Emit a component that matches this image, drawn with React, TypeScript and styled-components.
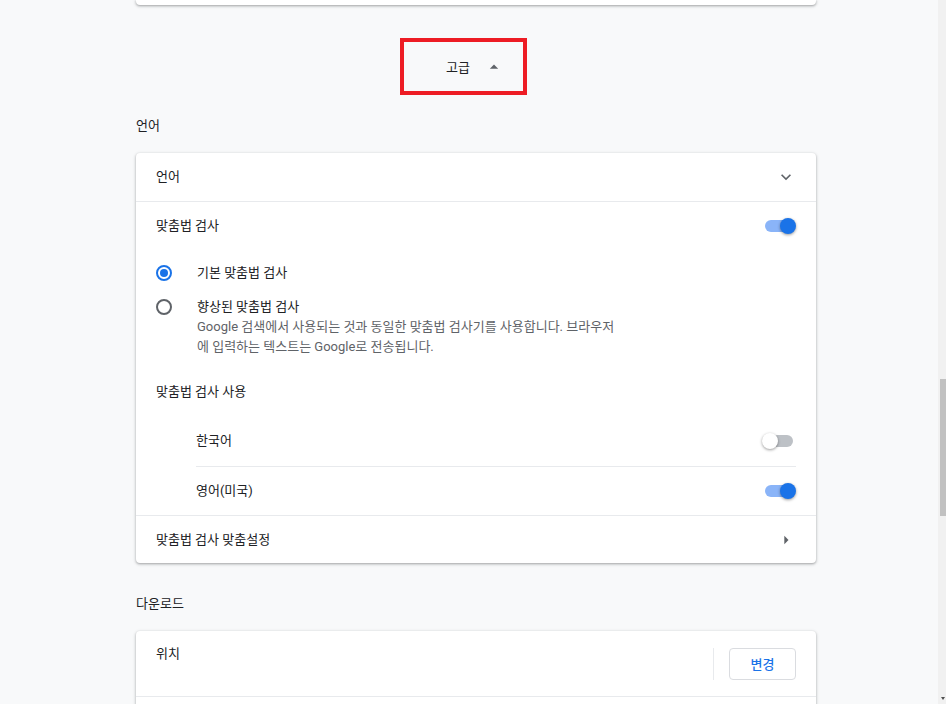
import React from 'react'
import styled, { createGlobalStyle } from 'styled-components'

const GlobalStyle = createGlobalStyle`
    html, body {
        margin: 0;
        padding: 0;
        background: #f8f9fa;
        overflow: hidden;
    }
    body {
        font-family: Roboto, "Noto Sans CJK KR", sans-serif;
        font-size: 13px;
        color: #202124;
        -webkit-font-smoothing: antialiased;
    }
`

const Toggle: React.FC<{ on?: boolean }> = ({ on }) => (
    <ToggleBox>
        <ToggleBar on={on} />
        <ToggleKnob on={on} />
    </ToggleBox>
)

const Radio: React.FC<{ checked?: boolean }> = ({ checked }) => (
    <RadioOuter checked={checked}>{checked && <RadioDot />}</RadioOuter>
)

const ChevronDown = () => (
    <svg width="20" height="20" viewBox="0 0 24 24">
        <path d="M7.41 8.59 12 13.17l4.59-4.58L18 10l-6 6-6-6z" fill="#5f6368" />
    </svg>
)

const ArrowRight = () => (
    <svg width="20" height="20" viewBox="0 0 24 24">
        <path d="M10 17l5-5-5-5v10z" fill="#5f6368" />
    </svg>
)

const ArrowUp = () => (
    <svg width="20" height="20" viewBox="0 0 24 24">
        <path d="M7 14l5-5 5 5z" fill="#5f6368" />
    </svg>
)

export default function App() {
    return (
        <>
            <GlobalStyle />
            <Page>
                <Column>
                    <TopCard />
                    <AdvancedButton>
                        <span>고급</span>
                        <ArrowUp />
                    </AdvancedButton>

                    <SectionTitle>언어</SectionTitle>
                    <Card>
                        <Row>
                            <Label>언어</Label>
                            <IconSlot>
                                <ChevronDown />
                            </IconSlot>
                        </Row>
                        <Row divided>
                            <Label>맞춤법 검사</Label>
                            <Toggle on />
                        </Row>
                        <RadioRow>
                            <Radio checked />
                            <RadioText>
                                <div>기본 맞춤법 검사</div>
                            </RadioText>
                        </RadioRow>
                        <RadioRow multi>
                            <Radio />
                            <RadioText>
                                <div>향상된 맞춤법 검사</div>
                                <Secondary>
                                    Google 검색에서 사용되는 것과 동일한 맞춤법 검사기를 사용합니다. 브라우저
                                    <br />
                                    에 입력하는 텍스트는 Google로 전송됩니다.
                                </Secondary>
                            </RadioText>
                        </RadioRow>
                        <Row>
                            <Label>맞춤법 검사 사용</Label>
                        </Row>
                        <SubList>
                            <SubRow height={50}>
                                <Label>한국어</Label>
                                <Toggle />
                            </SubRow>
                            <SubRow height={49} divided>
                                <Label>영어(미국)</Label>
                                <Toggle on />
                            </SubRow>
                        </SubList>
                        <Row divided>
                            <Label>맞춤법 검사 맞춤설정</Label>
                            <IconSlot>
                                <ArrowRight />
                            </IconSlot>
                        </Row>
                    </Card>

                    <SectionTitle spaced>다운로드</SectionTitle>
                    <Card>
                        <LocationRow>
                            <LocationText>
                                <div>위치</div>
                                <Secondary>&nbsp;</Secondary>
                            </LocationText>
                            <Separator />
                            <OutlineButton>변경</OutlineButton>
                        </LocationRow>
                        <Row divided />
                    </Card>
                </Column>
            </Page>
            <Scrollbar>
                <ScrollThumb />
                <ScrollArrow />
            </Scrollbar>
        </>
    )
}

const Page = styled.div`
    width: 938px;
    height: 704px;
    overflow: hidden;
`

const Column = styled.div`
    width: 680px;
    margin-left: 136px;
`

const Card = styled.div`
    background: #fff;
    border-radius: 4px;
    box-shadow: 0 1px 2px 0 rgba(60, 64, 67, 0.3), 0 1px 3px 1px rgba(60, 64, 67, 0.15);
`

const TopCard = styled(Card)`
    height: 5px;
    border-radius: 0 0 4px 4px;
`

const AdvancedButton = styled.button`
    box-sizing: border-box;
    display: flex;
    align-items: center;
    width: 127px;
    height: 57px;
    margin: 33px 0 0 264px;
    padding: 0 0 0 42px;
    gap: 14px;
    background: transparent;
    border: 4px solid #ed1c24;
    font: inherit;
    color: #202124;
    cursor: pointer;

    svg {
        flex: none;
    }
`

const SectionTitle = styled.div<{ spaced?: boolean }>`
    padding: ${({ spaced }) => (spaced ? '31px' : '21px')} 0 17px;
    line-height: 20px;
    color: #202124;
`

const Row = styled.div<{ divided?: boolean }>`
    box-sizing: border-box;
    display: flex;
    align-items: center;
    justify-content: space-between;
    min-height: 48px;
    padding: 0 20px;
    border-top: ${({ divided }) => (divided ? '1px solid #e8eaed' : 'none')};
`

const Label = styled.div`
    line-height: 20px;
`

const IconSlot = styled.div`
    display: flex;
    width: 20px;
    height: 20px;
`

const RadioRow = styled.div<{ multi?: boolean }>`
    display: flex;
    align-items: ${({ multi }) => (multi ? 'flex-start' : 'center')};
    gap: 25px;
    min-height: ${({ multi }) => (multi ? 'auto' : '48px')};
    padding: ${({ multi }) => (multi ? '0 20px 11px 20px' : '0 20px')};
`

const RadioOuter = styled.div<{ checked?: boolean }>`
    box-sizing: border-box;
    flex: none;
    display: flex;
    align-items: center;
    justify-content: center;
    width: 16px;
    height: 16px;
    margin: 2px 0;
    border-radius: 50%;
    border: 2px solid ${({ checked }) => (checked ? '#1a73e8' : '#5f6368')};
`

const RadioDot = styled.div`
    width: 8px;
    height: 8px;
    border-radius: 50%;
    background: #1a73e8;
`

const RadioText = styled.div`
    line-height: 20px;
`

const Secondary = styled.div`
    color: #5f6368;
    line-height: 20px;
`

const SubList = styled.div`
    margin: 0 20px 0 60px;
`

const SubRow = styled(Row)<{ height: number }>`
    min-height: ${({ height }) => height}px;
    padding: 0;
`

const ToggleBox = styled.span`
    position: relative;
    display: inline-block;
    flex: none;
    width: 34px;
    height: 16px;
`

const ToggleBar = styled.span<{ on?: boolean }>`
    position: absolute;
    left: 3px;
    top: 2px;
    width: 28px;
    height: 12px;
    border-radius: 6px;
    background: ${({ on }) => (on ? '#8ab4f8' : '#bdc1c6')};
`

const ToggleKnob = styled.span<{ on?: boolean }>`
    position: absolute;
    top: 0;
    left: ${({ on }) => (on ? '18px' : '0')};
    width: 16px;
    height: 16px;
    border-radius: 50%;
    background: ${({ on }) => (on ? '#1a73e8' : '#ffffff')};
    box-shadow: 0 1px 3px 0 rgba(0, 0, 0, 0.4);
`

const LocationRow = styled.div`
    box-sizing: border-box;
    display: flex;
    align-items: center;
    height: 65px;
    padding: 0 20px;
`

const LocationText = styled.div`
    flex: 1;
    line-height: 20px;
`

const Separator = styled.div`
    width: 1px;
    height: 32px;
    margin-right: 15px;
    background: #e8eaed;
`

const OutlineButton = styled.button`
    box-sizing: border-box;
    width: 67px;
    height: 32px;
    background: #fff;
    border: 1px solid #dadce0;
    border-radius: 4px;
    font: inherit;
    font-weight: 500;
    color: #1a73e8;
    cursor: pointer;
`

const Scrollbar = styled.div`
    position: fixed;
    top: 0;
    right: 0;
    width: 8px;
    height: 704px;
    background: #f1f1f1;
`

const ScrollThumb = styled.div`
    position: absolute;
    top: 379px;
    left: 2px;
    width: 6px;
    height: 137px;
    background: #c1c1c1;
`

const ScrollArrow = styled.div`
    position: absolute;
    bottom: 4px;
    left: 3px;
    width: 0;
    height: 0;
    border-left: 2.5px solid transparent;
    border-right: 2.5px solid transparent;
    border-top: 3px solid #505050;
`
